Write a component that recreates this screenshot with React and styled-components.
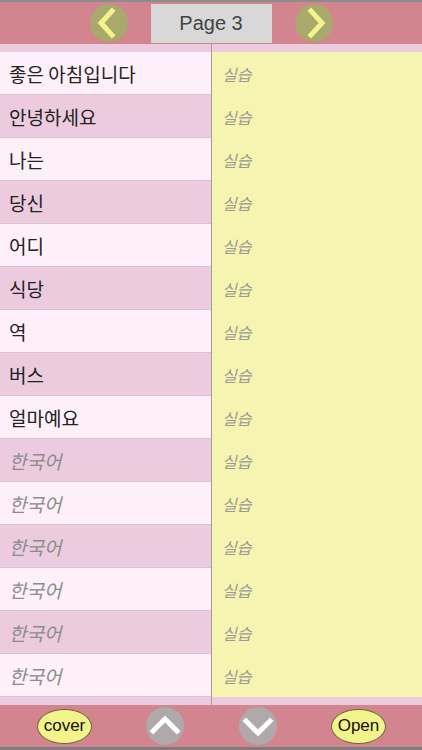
import styled, { createGlobalStyle } from 'styled-components';

const GlobalStyle = createGlobalStyle`
  html, body {
    margin: 0;
    padding: 0;
    background: #d2858f;
  }
  body {
    font-family: "Liberation Sans", Arial, "Noto Sans CJK KR", sans-serif;
  }
`;

const words = [
  '좋은 아침입니다',
  '안녕하세요',
  '나는',
  '당신',
  '어디',
  '식당',
  '역',
  '버스',
  '얼마예요',
];

const rows = Array.from({ length: 15 }, (_, i) => ({
  id: i,
  text: words[i] || '한국어',
  placeholder: !words[i],
}));

export default function App() {
  return (
    <Screen>
      <GlobalStyle />
      <TopBar>
        <RoundButton tone="olive" aria-label="previous page">
          <Chevron dir="left" color="#f4f48c" />
        </RoundButton>
        <PageLabel>Page 3</PageLabel>
        <RoundButton tone="olive" aria-label="next page">
          <Chevron dir="right" color="#f4f48c" />
        </RoundButton>
      </TopBar>

      <Body>
        <LeftColumn>
          {rows.map(row => (
            <WordRow key={row.id} odd={row.id % 2 === 1}>
              <WordText placeholder={row.placeholder}>{row.text}</WordText>
            </WordRow>
          ))}
        </LeftColumn>
        <Divider />
        <RightColumn>
          <NoteArea>
            {rows.map(row => (
              <NoteRow key={row.id}>실습</NoteRow>
            ))}
          </NoteArea>
        </RightColumn>
      </Body>

      <BottomBar>
        <PillButton>cover</PillButton>
        <RoundButton tone="gray" aria-label="scroll up">
          <Chevron dir="up" color="#ffffff" />
        </RoundButton>
        <RoundButton tone="gray" aria-label="scroll down">
          <Chevron dir="down" color="#ffffff" />
        </RoundButton>
        <PillButton>Open</PillButton>
      </BottomBar>
    </Screen>
  );
}

function Chevron({ dir, color }) {
  const points = {
    left: '22,7 11,19 22,31',
    right: '16,7 27,19 16,31',
    up: '7,24 19,12 31,24',
    down: '7,14 19,26 31,14',
  }[dir];
  return (
    <svg width="38" height="38" viewBox="0 0 38 38">
      <polyline
        points={points}
        fill="none"
        stroke={color}
        strokeWidth="5"
        strokeLinecap="square"
        strokeLinejoin="miter"
      />
    </svg>
  );
}

const Screen = styled.div`
  width: 422px;
  height: 750px;
  display: flex;
  flex-direction: column;
  background: #d2858f;
  overflow: hidden;
`;

const TopBar = styled.div`
  height: 42px;
  border-top: 2px solid #8c8c8c;
  display: flex;
  align-items: center;
  justify-content: center;
  gap: 23px;
  background: #d2858f;
`;

const RoundButton = styled.button`
  width: 38px;
  height: 38px;
  padding: 0;
  border: none;
  border-radius: 50%;
  display: flex;
  align-items: center;
  justify-content: center;
  background: ${({ tone }) => (tone === 'olive' ? '#a9a96b' : '#b0a9aa')};
`;

const PageLabel = styled.div`
  width: 121px;
  height: 39px;
  background: #d8d8d8;
  color: #444;
  font-size: 20px;
  display: flex;
  align-items: center;
  justify-content: center;
`;

const Body = styled.div`
  height: 661px;
  display: flex;
  background: #eccbdf;
`;

const LeftColumn = styled.div`
  width: 211px;
  padding: 8px 0;
  display: flex;
  flex-direction: column;
`;

const WordRow = styled.div`
  height: 43px;
  box-sizing: border-box;
  border-bottom: 1px solid #d6c4cd;
  background: ${({ odd }) => (odd ? '#eccbdf' : '#fdf0f9')};
  display: flex;
  align-items: center;
  padding-left: 9px;
`;

const WordText = styled.span`
  font-family: "Noto Sans CJK KR", "Liberation Sans", sans-serif;
  font-size: 19px;
  color: ${({ placeholder }) => (placeholder ? '#8c8c8c' : '#222')};
  font-style: ${({ placeholder }) => (placeholder ? 'italic' : 'normal')};
`;

const Divider = styled.div`
  width: 1px;
  background: #a49aa0;
`;

const RightColumn = styled.div`
  flex: 1;
  padding: 9px 0 8px;
  display: flex;
  flex-direction: column;
`;

const NoteArea = styled.div`
  flex: 1;
  background: #f5f5b1;
  margin-top: -1px;
`;

const NoteRow = styled.div`
  height: 43px;
  display: flex;
  align-items: center;
  padding-left: 10px;
  font-family: "Noto Sans CJK KR", sans-serif;
  font-size: 16px;
  font-style: italic;
  color: #9a9a90;
`;

const BottomBar = styled.div`
  height: 42px;
  border-bottom: 3px solid #7c7c7c;
  display: flex;
  align-items: center;
  justify-content: space-between;
  padding: 0 36px 0 37px;
  background: #d2858f;
`;

const PillButton = styled.button`
  width: 55px;
  height: 35px;
  padding: 0;
  border-radius: 50%;
  border: 1.5px solid #6e6a3a;
  background: #f3f38c;
  color: #111;
  font-family: "Liberation Sans", Arial, sans-serif;
  font-size: 17px;
  display: flex;
  align-items: center;
  justify-content: center;
`;
